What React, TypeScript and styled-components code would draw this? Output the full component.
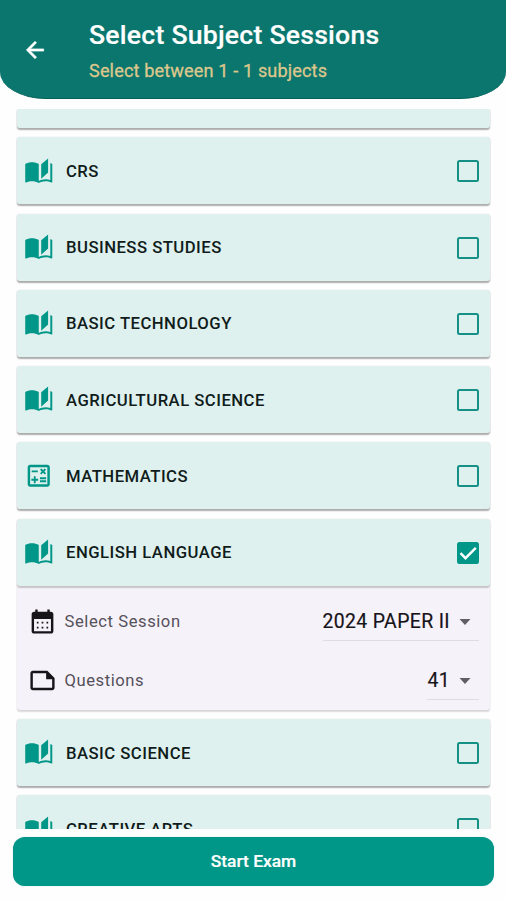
import React from "react";
import styled, { createGlobalStyle, css } from "styled-components";

const GlobalStyle = createGlobalStyle`
  * { box-sizing: border-box; }
  body { margin: 0; background: #fefefe; font-family: Roboto, "Liberation Sans", sans-serif; }
`;

const Screen = styled.main`
  display: flex;
  flex-direction: column;
  width: 506px;
  height: 900px;
  overflow: hidden;
`;

const Header = styled.header`
  display: flex;
  flex: none;
  height: 98.5px;
  padding-left: 22px;
  background: #0a766e;
  border-bottom: 1px solid #056159;
  border-radius: 0 0 46px 46px / 0 0 27px 27px;
`;

const BackButton = styled.button`
  width: 26px;
  height: 26px;
  margin: 37px 41px 0 0;
  padding: 0;
  border: 0;
  background: none;
  color: #fff;
  stroke: #fff;
  stroke-width: 0.6;
`;

const Icon = styled.svg<{ $size: number }>`
  display: block;
  flex: none;
  width: ${(p) => p.$size}px;
  height: ${(p) => p.$size}px;
  fill: currentColor;
`;

const Title = styled.h1`
  margin: 18px 0 0;
  font-size: 26.6px;
  line-height: 34px;
  font-weight: 500;
  letter-spacing: 0.24px;
  color: #fff;
  -webkit-text-stroke: 0.2px #fff;
`;

const Subtitle = styled.p`
  margin: 7px 0 0;
  font-size: 18.1px;
  line-height: 24px;
  letter-spacing: 0.14px;
  color: #dcc78c;
  -webkit-text-stroke: 0.3px #dcc78c;
`;

const List = styled.section`
  display: flex;
  flex-direction: column;
  justify-content: flex-start;
  gap: 9.3px;
  height: 720px;
  margin-top: 10px;
  padding: 0 16px 0 17px;
  overflow: hidden;
`;

const Card = styled.article`
  flex: none;
  border-radius: 3px;
  background: #f6f2f9;
  box-shadow: 0 1.5px 1.5px rgba(0, 0, 0, 0.14), 0 0 1.5px rgba(0, 0, 0, 0.1);
`;

const CardHead = styled.div<{ $partial?: boolean }>`
  display: flex;
  align-items: center;
  height: ${(p) => (p.$partial ? "19.5px" : "67px")};
  padding: 1px 11px 0 7px;
  border-radius: ${(p) => (p.$partial ? "0 0 3px 3px" : "3px")};
  background: #dff1ee;
  box-shadow: 0 1.5px 1.5px rgba(0, 0, 0, 0.2);
  color: #009688;
`;

const IconSlot = styled.span`
  display: flex;
  justify-content: center;
  width: 30px;
  margin-right: 12px;
  padding-bottom: 2px;
`;

const Subject = styled.span`
  flex: 1;
  font-size: 16.7px;
  font-weight: 500;
  letter-spacing: 0.47px;
  color: #101c1b;
`;

const CheckBox = styled.span<{ $checked?: boolean }>`
  display: flex;
  align-items: center;
  justify-content: center;
  width: 22px;
  height: 22px;
  border: 2px solid #159084;
  border-radius: 2.5px;
  ${(p) =>
    p.$checked &&
    css`
      background: #009688;
      border-color: #009688;
    `}
`;

const CheckMark = styled.svg`
  flex: none;
  width: 22px;
  height: 22px;
  fill: none;
  stroke: #fff;
  stroke-width: 2.4;
`;

const Options = styled.div`
  display: grid;
  grid-template-rows: 59px 64px;
  height: 124px;
  padding: 7px 11px 0 10.5px;
`;

const OptionRow = styled.div`
  display: flex;
  height: 58px;
  align-items: center;
  color: #16151a;
`;

const OptionLabel = styled.span`
  flex: 1;
  margin-left: 8px;
  font-size: 16.6px;
  letter-spacing: 0.57px;
  color: #55515b;
`;

const Select = styled.span`
  display: flex;
  align-items: center;
  height: 39px;
  border-bottom: 1px solid #dfdbe3;
  font-size: 19.4px;
  letter-spacing: 0.38px;
  color: #161419;
  -webkit-text-stroke: 0.2px #161419;
`;

const Caret = styled.svg`
  width: 12px;
  height: 6px;
  margin: 1px 8.5px 0 8.5px;
  fill: #625e67;
`;

const StartButton = styled.button`
  flex: none;
  height: 49px;
  margin: 8px 12px 0 13px;
  padding: 0;
  border: 0;
  border-radius: 12px;
  background: #009688;
  box-shadow: 0 0 1px #00968880;
  font: 500 17.4px/49px Roboto, "Liberation Sans", sans-serif;
  color: #fff;
  -webkit-text-stroke: 0.2px #fff;
`;

const paths = {
  back: "M20 11H7.83l5.59-5.59L12 4l-8 8 8 8 1.41-1.41L7.83 13H20v-2z",
  book: "M19.6 2L14 6.8V18.6L19.6 13.4V2M6.5 5C4.55 5 2.45 5.4 1 6.5V21.16C1 21.41 1.25 21.66 1.5 21.66C1.6 21.66 1.65 21.59 1.75 21.59C3.1 20.94 5.05 20.5 6.5 20.5C8.45 20.5 10.55 20.9 12 22C13.35 21.15 15.8 20.5 17.5 20.5C19.15 20.5 20.85 20.81 22.25 21.56C22.35 21.61 22.4 21.59 22.5 21.59C22.75 21.59 23 21.34 23 21.09V6.5C22.4 6.05 22 5.85 21.4 5.6V19.5C20.2 19.15 18.9 19 17.5 19C15.8 19 13.35 19.6 12 20.4V6.5C10.55 5.4 8.45 5 6.5 5Z",
  calculate:
    "M19 3H5c-1.1 0-2 .9-2 2v14c0 1.1.9 2 2 2h14c1.1 0 2-.9 2-2V5c0-1.1-.9-2-2-2zm0 16H5V5h14v14zM6.25 7.72h5v1.5h-5zM13 15.75h5v1.5h-5zM13 13.25h5v1.5h-5zM8 18h1.5v-2h2v-1.5h-2v-2H8v2H6V16h2zM14.09 10.95l1.41-1.41 1.41 1.41 1.06-1.06-1.41-1.42 1.41-1.41L16.91 6 15.5 7.41 14.09 6l-1.06 1.06 1.41 1.41-1.41 1.42z",
  calendar:
    "M19 4h-1V2h-2v2H8V2H6v2H5c-1.11 0-1.99.9-1.99 2L3 20c0 1.1.89 2 2 2h14c1.1 0 2-.9 2-2V6c0-1.1-.9-2-2-2zm0 16H5V10h14v10zM8.7 13.7H7.3v-1.4h1.4v1.4zm4 0h-1.4v-1.4h1.4v1.4zm4 0h-1.4v-1.4h1.4v1.4zm-8 4H7.3v-1.4h1.4v1.4zm4 0h-1.4v-1.4h1.4v1.4zm4 0h-1.4v-1.4h1.4v1.4z",
  note: "M16 4H4c-1.1 0-2 .9-2 2v12.01c0 1.1.9 1.99 2 1.99h16c1.1 0 2-.9 2-2v-8l-6-6zM4 18.01V6h11v5h5v7.01H4z",
};

function Glyph({ name, size }: { name: keyof typeof paths; size: number }) {
  return (
    <Icon $size={size} viewBox="0 0 24 24" aria-hidden>
      <path d={paths[name]} />
    </Icon>
  );
}

function SubjectCard({
  name,
  icon = "book",
  checked,
  children,
}: {
  name: string;
  icon?: "book" | "calculate";
  checked?: boolean;
  children?: React.ReactNode;
}) {
  return (
    <Card>
      <CardHead>
        <IconSlot>
          <Glyph name={icon} size={29.5} />
        </IconSlot>
        <Subject>{name}</Subject>
        <CheckBox $checked={checked} role="checkbox" aria-checked={!!checked}>
          {checked && (
            <CheckMark viewBox="0 0 22 22">
              <path d="M3.5 11.2l5 5L18.8 5.8" />
            </CheckMark>
          )}
        </CheckBox>
      </CardHead>
      {children}
    </Card>
  );
}

function Option({ icon, label, value }: { icon: "calendar" | "note"; label: string; value: string }) {
  return (
    <OptionRow>
      <Glyph name={icon} size={29} />
      <OptionLabel>{label}</OptionLabel>
      <Select>
        {value}
        <Caret viewBox="0 0 12 6">
          <path d="M0.5 0h11L6 6z" />
        </Caret>
      </Select>
    </OptionRow>
  );
}

export default function App() {
  return (
    <>
      <GlobalStyle />
      <Screen>
        <Header>
          <BackButton aria-label="Back">
            <Glyph name="back" size={26} />
          </BackButton>
          <div>
            <Title>Select Subject Sessions</Title>
            <Subtitle>Select between 1 - 1 subjects</Subtitle>
          </div>
        </Header>
        <List>
          <Card>
            <CardHead $partial />
          </Card>
          <SubjectCard name="CRS" />
          <SubjectCard name="BUSINESS STUDIES" />
          <SubjectCard name="BASIC TECHNOLOGY" />
          <SubjectCard name="AGRICULTURAL SCIENCE" />
          <SubjectCard name="MATHEMATICS" icon="calculate" />
          <SubjectCard name="ENGLISH LANGUAGE" checked>
            <Options>
              <Option icon="calendar" label="Select Session" value="2024 PAPER II" />
              <Option icon="note" label="Questions" value="41" />
            </Options>
          </SubjectCard>
          <SubjectCard name="BASIC SCIENCE" />
          <SubjectCard name="CREATIVE ARTS" />
        </List>
        <StartButton>Start Exam</StartButton>
      </Screen>
    </>
  );
}
